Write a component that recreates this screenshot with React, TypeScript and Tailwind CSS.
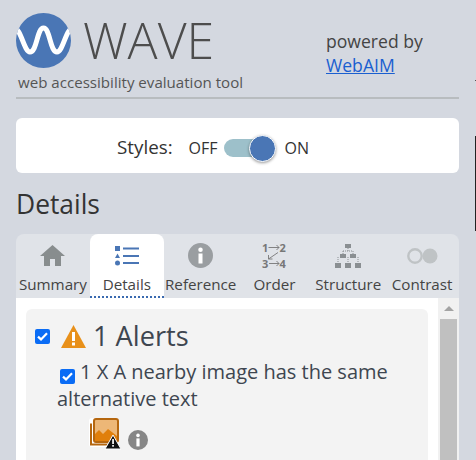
const tabs = ["Summary", "Details", "Reference", "Order", "Structure", "Contrast"];

function InfoCircle({ size, color }: { size: number; color: string }) {
  return (
    <svg width={size} height={size} viewBox="0 0 20 20">
      <circle cx="10" cy="10" r="10" fill={color} />
      <circle cx="10" cy="5.4" r="1.8" fill="#fff" />
      <rect x="8.4" y="8.4" width="3.2" height="8" fill="#fff" />
    </svg>
  );
}

function TabIcon({ name }: { name: string }) {
  if (name === "Summary") {
    return (
      <svg width="25" height="21" viewBox="0 0 25 21">
        <path d="M12.5 0 L25 11 H21 V21 H15 V14 H10 V21 H4 V11 H0 Z" fill="#888d8e" />
      </svg>
    );
  }
  if (name === "Details") {
    return (
      <svg width="24" height="20" viewBox="0 0 24 20">
        <rect x="0" y="0" width="5" height="5" fill="#4a76b5" />
        <path d="M2.5 7.5 L5 12 H0 Z" fill="#4a76b5" />
        <circle cx="2.5" cy="17" r="2.5" fill="#4a76b5" />
        <rect x="8" y="1.5" width="16" height="2" fill="#4a76b5" />
        <rect x="8" y="9" width="16" height="2" fill="#4a76b5" />
        <rect x="8" y="16" width="16" height="2" fill="#4a76b5" />
      </svg>
    );
  }
  if (name === "Reference") return <InfoCircle size={25} color="#9a9ea1" />;
  if (name === "Order") {
    return (
      <svg width="24" height="25" viewBox="0 0 24 25" fill="none" stroke="#777" strokeWidth="0.9" className="overflow-visible">
        <text x="0" y="8.5" fontSize="11" fill="#777" stroke="none" fontFamily="Open Sans" fontWeight="700">1</text>
        <text x="17.5" y="8.5" fontSize="11" fill="#777" stroke="none" fontFamily="Open Sans" fontWeight="700">2</text>
        <text x="0" y="24.5" fontSize="11" fill="#777" stroke="none" fontFamily="Open Sans" fontWeight="700">3</text>
        <text x="17.5" y="24.5" fontSize="11" fill="#777" stroke="none" fontFamily="Open Sans" fontWeight="700">4</text>
        <path d="M6.5 4.5 H17 M14.5 2 L17 4.5 L14.5 7" />
        <path d="M7 20.5 H17 M14.5 18 L17 20.5 L14.5 23" />
        <path d="M16 9.5 L6.5 16 M6.5 12 V16 H10.5" />
      </svg>
    );
  }
  if (name === "Structure") {
    return (
      <svg width="26" height="24" viewBox="0 0 26 24">
        <g stroke="#8a8f92" strokeWidth="1" fill="none" strokeDasharray="1 1">
          <path d="M13 4 V7 M8 7 H18 M8 7 V10 M18 7 V10 M3 13 V19 M13 13 V19 M23 13 V19" />
        </g>
        <g fill="#8a8f92">
          <rect x="10" y="0" width="6" height="4" />
          <rect x="5" y="10" width="6" height="4" />
          <rect x="15" y="10" width="6" height="4" />
          <rect x="0" y="19" width="6" height="5" />
          <rect x="10" y="19" width="6" height="5" />
          <rect x="20" y="19" width="6" height="5" />
        </g>
      </svg>
    );
  }
  return (
    <svg width="31" height="16" viewBox="0 0 31 16">
      <circle cx="8" cy="8" r="6.7" fill="none" stroke="#bfc3c5" strokeWidth="2.4" />
      <circle cx="23" cy="8" r="7.5" fill="#bfc3c5" />
    </svg>
  );
}

function Check() {
  return (
    <span className="flex h-[15px] w-[15px] items-center justify-center rounded-[2px] bg-[#0a6cf5]">
      <svg width="11" height="9" viewBox="0 0 11 9" fill="none" stroke="#fff" strokeWidth="2.2">
        <path d="M1 4.6 L4 7.4 L10 1.2" />
      </svg>
    </span>
  );
}

export default function App() {
  return (
    <div className="relative h-[460px] w-[476px] overflow-hidden bg-[#d4d8e0] pl-4 pr-[17px] font-['Open_Sans',sans-serif] text-[#444]">
      {/* header */}
      <div className="flex h-[99px] border-b-2 border-[#b8bcbf]">
        <div className="w-[310px] pt-[13px]">
          <div className="flex items-center">
            <svg width="55" height="55" viewBox="0 0 55 55">
              <defs>
                <clipPath id="logo">
                  <circle cx="27.5" cy="27.5" r="27.5" />
                </clipPath>
              </defs>
              <circle cx="27.5" cy="27.5" r="27.5" fill="#4a76b5" />
              <path
                clipPath="url(#logo)"
                d="M-2 15 C5 15 8 39 14 39 C21 39 21 15 27.5 15 C34 15 34 39 41 39 C47 39 50 15 57 15"
                fill="none"
                stroke="#fff"
                strokeWidth="5"
              />
            </svg>
            <span className="ml-3 text-[50px] leading-[55px] font-light text-[#4d4d4d]">WAVE</span>
          </div>
          <p className="mt-[4px] pl-[2px] text-[15.1px] leading-[20px] text-[#555]">web accessibility evaluation tool</p>
        </div>
        <div className="pt-[29px] text-[17.6px] leading-[24px] text-[#444]">
          <p>powered by</p>
          <a href="#" className="text-[#1a5fd0] underline">WebAIM</a>
        </div>
      </div>

      {/* styles toggle */}
      <div className="mt-[19px] flex h-[55px] items-center rounded-[6px] bg-white pt-[4px] pl-[101px] text-[#333]">
        <span className="text-[18.8px]">Styles:</span>
        <span className="ml-4 text-[16px]">OFF</span>
        <span className="relative ml-[6px] h-[18px] w-[49px] rounded-full bg-[#9dc0ca]">
          <span className="absolute top-[-4px] right-[-3px] h-[27px] w-[27px] rounded-full border border-white bg-[#4a76b5] shadow-[0_1px_3px_rgba(0,0,0,0.4)]" />
        </span>
        <span className="ml-[12px] text-[16px]">ON</span>
      </div>

      <h2 className="mt-[15px] text-[26.4px] leading-[32px] font-normal text-[#333]">Details</h2>

      {/* tabs */}
      <div className="mt-[14px] flex h-[64px] rounded-t-[8px] bg-[#e0e3e8]">
        {tabs.map((tab) => {
          const active = tab === "Details";
          return (
            <div
              key={tab}
              className={
                active
                  ? "flex w-[74px] flex-col items-center rounded-t-[8px] border-b-2 border-dotted border-[#3a6ab0] bg-white"
                  : "flex flex-1 flex-col items-center"
              }
            >
              <div className="flex h-[42px] items-center justify-center pt-[1px]">
                <TabIcon name={tab} />
              </div>
              <span className="text-[15.2px] leading-[16px] whitespace-nowrap text-[#444]">{tab}</span>
            </div>
          );
        })}
      </div>

      {/* panel */}
      <div className="flex h-[162px] overflow-hidden bg-white">
        <div className="flex-1 px-[10px] pt-[11px]">
          <div className="h-[160px] rounded-[6px] bg-[#f3f3f3] px-[9px] pt-[10px] text-[#3e4650]">
            <div className="flex items-center">
              <Check />
              <svg className="ml-[11px]" width="25" height="23" viewBox="0 0 25 23">
                <path d="M12.5 0 L25 23 H0 Z" fill="#e8901a" />
                <rect x="11" y="7" width="3" height="9" fill="#fff" />
                <rect x="11" y="17.5" width="3" height="3" fill="#fff" />
              </svg>
              <span className="ml-[7px] text-[27.2px] leading-[34px]">1 Alerts</span>
            </div>
            <div className="mt-[5px] pl-[22px] text-[20px] leading-[27px]">
              <span className="mr-[5px] ml-[3px] inline-flex align-[-2px]">
                <Check />
              </span>
              1 X A nearby image has the same alternative text
            </div>
            <div className="mt-[6px] ml-[53px] flex items-end">
              <svg width="33" height="32" viewBox="0 0 33 32">
                <rect x="1" y="0" width="30" height="29" rx="3" fill="#fff" />
                <path d="M2.5 5 V26 H24" transform="translate(0.5 0.5)" fill="none" stroke="#b5660e" strokeWidth="2" />
                <rect x="6" y="1" width="24" height="23" rx="2" fill="#edb777" stroke="#b5660e" strokeWidth="2" />
                <path d="M7 23 V16 L11 12 L15 16 L20 11 L29 18 V23 Z" fill="#e07f0c" />
                <path d="M25 17 L33 31 H17 Z" fill="#111" stroke="#fff" strokeWidth="1" />
                <rect x="24.2" y="21" width="1.7" height="5" fill="#fff" />
                <rect x="24.2" y="27" width="1.7" height="1.7" fill="#fff" />
              </svg>
              <span className="ml-[7px]">
                <InfoCircle size={20} color="#868686" />
              </span>
            </div>
          </div>
        </div>
        <div className="flex w-[21px] flex-col items-center bg-[#f1f1f1]">
          <div className="flex h-[21px] w-full items-center justify-center">
            <div className="h-0 w-0 border-r-[5px] border-b-[5px] border-l-[5px] border-r-transparent border-b-[#a3a3a3] border-l-transparent" />
          </div>
          <div className="h-[141px] w-[17px] bg-[#c0c0c0]" />
        </div>
      </div>

      {/* clipped edge of the page behind */}
      <div className="absolute top-[80px] right-0 h-px w-px bg-[#555]" />
      <div className="absolute top-[136px] right-0 h-[95px] w-px bg-[#222]" />
    </div>
  );
}
